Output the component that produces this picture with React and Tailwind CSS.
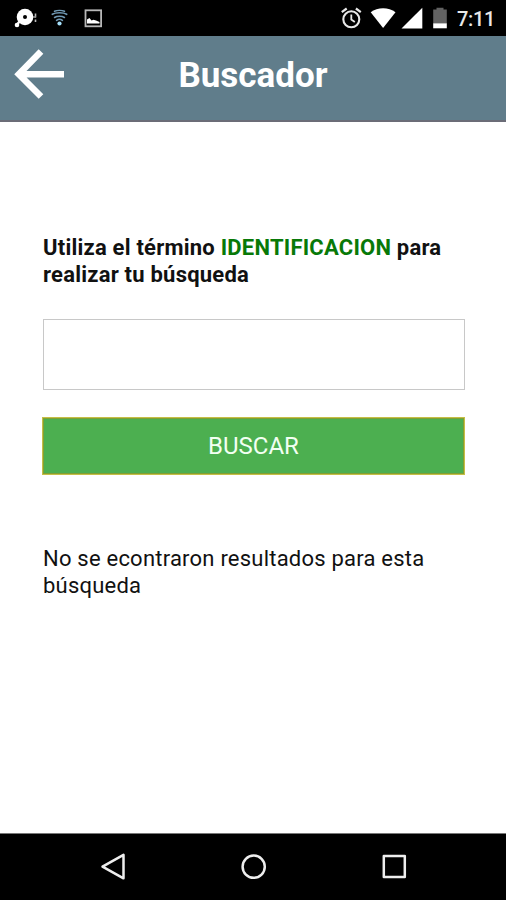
/**
 * Buscador — search screen inside the Android system chrome.
 */

import React, { useState } from 'react';

// ── Status bar icons ──

const DiscIcon = () => (
  <svg width="24" height="20" viewBox="0 0 24 20" aria-hidden="true">
    <circle cx="11" cy="9" r="8.3" fill="#fff" />
    <circle cx="11" cy="9" r="2" fill="#000" />
    <path d="M6 13L3 16.500" stroke="#fff" strokeWidth="2.500" />
    <circle cx="3" cy="17" r="2.300" fill="#fff" />
    <path d="M21.500 5.500v4M21.500 11.500v2.500" stroke="#bbb" strokeWidth="1.600" />
    <path d="M19 9h3" stroke="#999" strokeWidth="1.500" />
  </svg>
);

const HotspotIcon = () => (
  <svg width="17" height="18" viewBox="0 0 17 18" fill="none" aria-hidden="true">
    <g stroke="#7099b4" strokeWidth="1.600" strokeLinecap="round">
      <path d="M3.500 2.200C6 1.200 11 1.200 13.500 2.200" />
      <path d="M1.300 5.300C4.500 3.300 12.500 3.300 15.700 5.300" />
      <path d="M3.600 8.500C6 6.900 11 6.900 13.400 8.500" />
      <path d="M5.600 11.300C7.200 10.100 9.800 10.100 11.400 11.300" />
    </g>
    <circle cx="8.500" cy="14.500" r="2.100" fill="#a5e0fa" />
  </svg>
);

const PictureIcon = () => (
  <svg width="19" height="19" viewBox="0 0 19 19" aria-hidden="true">
    <rect x="1.500" y="1.300" width="15.600" height="16" fill="none" stroke="#b8b8b8" strokeWidth="1.800" />
    <path d="M3 14.500v-4l2.500-1.500 2 2.500 2-.8 2.500.8 3.500 1.500v1.500z" fill="#fff" />
  </svg>
);

const AlarmIcon = () => (
  <svg width="21" height="22" viewBox="0 0 21 22" fill="none" stroke="#e8e8e8" aria-hidden="true">
    <circle cx="10.300" cy="12.300" r="8" strokeWidth="2.100" />
    <path d="M10.300 7.500v5l3.500 2.500" strokeWidth="1.800" />
    <path d="M.8 5.200L5.700 1.500M14.900 1.500l4.900 3.700" strokeWidth="2.200" />
  </svg>
);

const SignalIcons = () => (
  <svg width="79" height="23" viewBox="0 0 79 23" aria-hidden="true">
    <path d="M.7 5.300C7.500-.1 18.700-.1 25.500 5.300L13.100 21z" fill="#fff" />
    <path d="M52.300.7V21.500H31.500z" fill="#fff" />
    <path d="M66.500.8h7v1.700h3.300v14H63.200v-14h3.300z" fill="#626262" />
    <path d="M63.200 16.300h13.600v5H63.200z" fill="#fff" />
  </svg>
);

const StatusBar = () => (
  <div className="flex h-9 items-center justify-between bg-black pr-[11px] pl-[14px]">
    <div className="flex items-center">
      <DiscIcon />
      <div className="flex items-center gap-4 pl-[13px]">
        <HotspotIcon />
        <PictureIcon />
      </div>
    </div>
    <div className="flex items-center gap-2">
      <AlarmIcon />
      <SignalIcons />
      <span className="w-[38px] pt-0.5 text-[20px] leading-6 font-medium tracking-[-0.3px] whitespace-nowrap text-[#e8e8e8]">
        7:11
      </span>
    </div>
  </div>
);

// ── Header ──

const Header = ({ title }) => (
  <header className="grid h-[86px] grid-cols-[51px_1fr_51px] items-start border-b-2 border-[#6b6c77] bg-[#607d8b] px-[14px] pt-[13px]">
    <button type="button" aria-label="Volver">
      <svg width="51" height="50" viewBox="0 0 51 50" fill="none" stroke="#fff" strokeWidth="6.500">
        <path d="M27 2.500L4.800 25.300 27 47.500M5 25.300h45" />
      </svg>
    </button>
    <h1 className="pt-[6px] text-center text-[35px] leading-[42px] font-bold text-white">{title}</h1>
  </header>
);

// ── Android navigation ──

const NavBar = () => (
  <nav className="h-[67px] border-t border-[#777] bg-black">
    <svg width="506" height="66" viewBox="0 0 506 66" fill="none" stroke="#eee" strokeWidth="2.500" strokeLinejoin="round">
      <path d="M102.500 32.700L123.500 20.800V44.300z" />
      <circle cx="253.700" cy="32.700" r="11.100" />
      <rect x="383.800" y="22" width="21" height="21" />
    </svg>
  </nav>
);

const App = () => {
  const [term, setTerm] = useState('');

  return (
    <div className="flex h-[900px] w-full flex-col overflow-hidden bg-white font-['Roboto',sans-serif]">
      <StatusBar />
      <Header title="Buscador" />
      <main className="flex flex-1 flex-col pt-[112px] pr-[41px] pl-[42px] text-[22px] leading-[27px] tracking-[0.22px] text-[#111]">
        <p className="pl-px font-bold whitespace-nowrap">
          Utiliza el término <span className="text-[#087908]">IDENTIFICACION</span> para
          <br />
          realizar tu búsqueda
        </p>
        <div className="flex flex-col gap-[27px] pt-[31px] pb-[70px]">
          <input
            className="ml-px h-[71px] border border-[#c8c8c8] px-3 outline-none"
            value={term}
            onChange={(e) => setTerm(e.target.value)}
            aria-label="Término"
          />
          <button
            type="button"
            className="h-[58px] border border-[#c5bf45] bg-[#4caf50] text-[24px] tracking-normal text-[#f2fff2] inset-shadow-[0_0_0_1px_#839f33]"
          >
            BUSCAR
          </button>
        </div>
        <p className="pl-px whitespace-nowrap">
          No se econtraron resultados para esta
          <br />
          búsqueda
        </p>
      </main>
      <NavBar />
    </div>
  );
};

export default App;
